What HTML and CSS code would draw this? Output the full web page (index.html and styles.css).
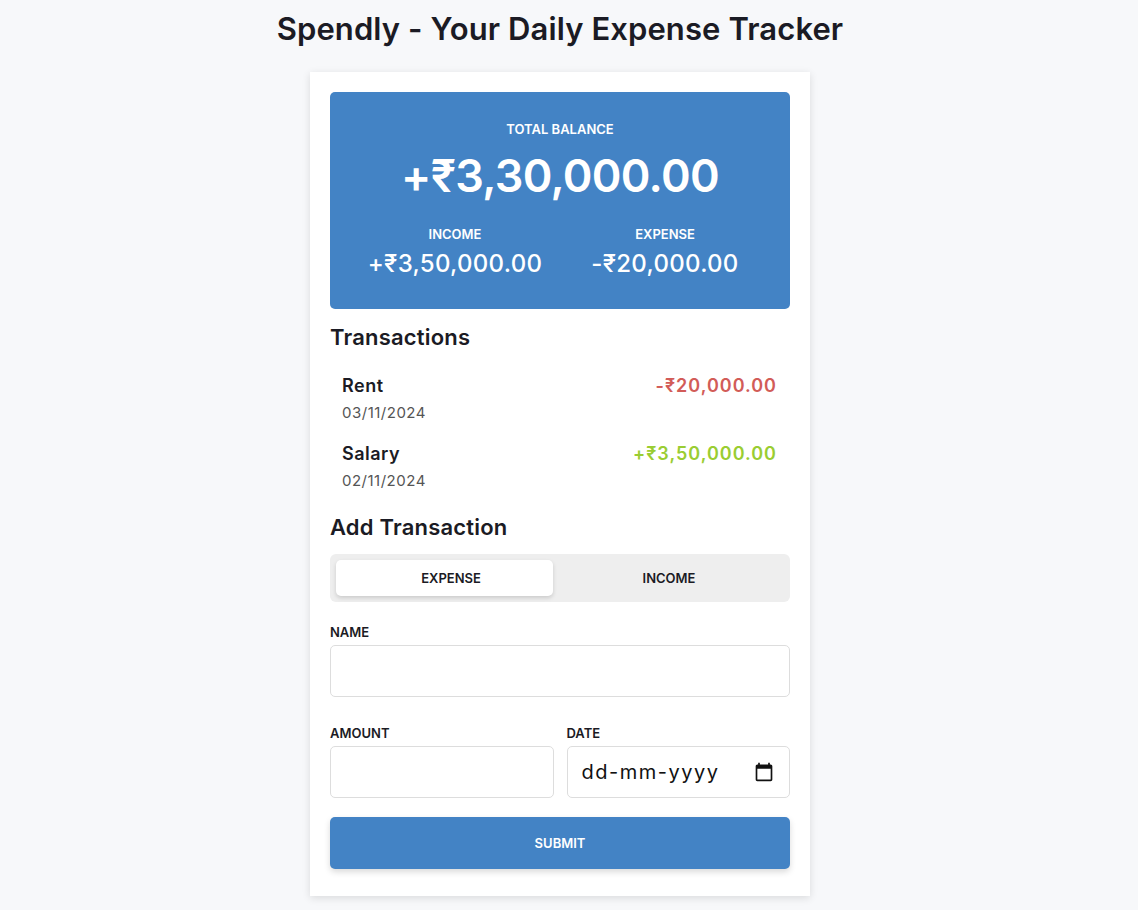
FILE: index.html
```html
<!DOCTYPE html>
<html lang="en">
<head>
<meta charset="utf-8">
<title>Spendly</title>
<link rel="stylesheet" href="styles.css">
</head>
<body>
<div class="page">
  <h1 class="title">Spendly - Your Daily Expense Tracker</h1>
  <main class="card">
    <section class="balance">
      <div class="balance-label">TOTAL BALANCE</div>
      <div class="balance-amount">+₹3,30,000.00</div>
      <div class="summary">
        <div class="summary-col">
          <div class="summary-label">INCOME</div>
          <div class="summary-amount">+₹3,50,000.00</div>
        </div>
        <div class="summary-col">
          <div class="summary-label">EXPENSE</div>
          <div class="summary-amount">-₹20,000.00</div>
        </div>
      </div>
    </section>

    <h2 class="section-title">Transactions</h2>
    <ul class="tx-list">
      <li class="tx">
        <div class="tx-info">
          <div class="tx-name">Rent</div>
          <div class="tx-date">03/11/2024</div>
        </div>
        <div class="tx-amount expense">-₹20,000.00</div>
      </li>
      <li class="tx">
        <div class="tx-info">
          <div class="tx-name">Salary</div>
          <div class="tx-date">02/11/2024</div>
        </div>
        <div class="tx-amount income">+₹3,50,000.00</div>
      </li>
    </ul>

    <h2 class="section-title add-title">Add Transaction</h2>
    <form class="form">
      <div class="toggle">
        <button type="button" class="toggle-btn active">EXPENSE</button>
        <button type="button" class="toggle-btn">INCOME</button>
      </div>
      <label class="field">
        <span class="field-label">NAME</span>
        <input class="input" type="text">
      </label>
      <div class="row">
        <label class="field">
          <span class="field-label">AMOUNT</span>
          <input class="input" type="text" inputmode="decimal">
        </label>
        <label class="field">
          <span class="field-label">DATE</span>
          <span class="date-wrap">
            <input class="input date-input" type="text" placeholder="dd-mm-yyyy">
            <svg class="date-icon" viewBox="0 0 24 24" width="20" height="20" aria-hidden="true">
              <path d="M20 3h-1V1h-2v2H7V1H5v2H4c-1.1 0-2 .9-2 2v16c0 1.1.9 2 2 2h16c1.1 0 2-.9 2-2V5c0-1.1-.9-2-2-2zm0 18H4V8h16v13z" fill="#111"/>
            </svg>
          </span>
        </label>
      </div>
      <button type="button" class="submit">SUBMIT</button>
    </form>
  </main>
</div>
</body>
</html>
```

FILE: styles.css
```css
* { box-sizing: border-box; }

body {
  margin: 0;
  background: #f7f8fa;
  font-family: "Inter", "Noto Sans", sans-serif;
  color: #1b1b24;
}

.page {
  display: flex;
  flex-direction: column;
  align-items: center;
  padding-right: 18px;
  padding-bottom: 20px;
}

.title {
  margin: 12px 0 26px;
  font-size: 31px;
  font-weight: 600;
  line-height: 34px;
  letter-spacing: 0.1px;
  color: #1b1b24;
}

.card {
  width: 500px;
  background: #fff;
  padding: 20px 20px 27px;
  box-shadow: 0 2px 8px rgba(0, 0, 0, 0.12);
}

.balance {
  background: #4383c5;
  color: #fff;
  border-radius: 5px;
  padding: 28px 20px 30px;
  text-align: center;
}

.balance-label,
.summary-label {
  font-size: 13px;
  font-weight: 600;
  line-height: 18px;
}

.balance-amount {
  font-size: 45px;
  font-weight: 600;
  line-height: 56px;
  letter-spacing: -0.7px;
  margin-top: 10px;
}

.summary {
  display: grid;
  grid-template-columns: 190px 190px;
  column-gap: 20px;
  justify-content: center;
  margin-top: 21px;
}

.summary-amount {
  font-size: 24px;
  font-weight: 500;
  line-height: 30px;
  letter-spacing: 0.3px;
  margin-top: 6px;
}

.section-title {
  margin: 13px 0 0;
  font-size: 22px;
  font-weight: 600;
  line-height: 30px;
  letter-spacing: 0.2px;
}

.tx-list {
  list-style: none;
  margin: 21px 0 0;
  padding: 0;
  display: flex;
  flex-direction: column;
  gap: 14px;
}

.tx {
  display: flex;
  justify-content: space-between;
  align-items: flex-start;
  padding: 0 13px 0 12px;
}

.tx-name {
  font-size: 18px;
  font-weight: 600;
  line-height: 26px;
  letter-spacing: 0.5px;
}

.tx-date {
  font-size: 15px;
  color: #555;
  line-height: 28px;
  letter-spacing: 0.5px;
}

.tx-amount {
  font-size: 18px;
  font-weight: 600;
  line-height: 26px;
  letter-spacing: 1px;
}

.tx-amount.expense { color: #d25c58; }
.tx-amount.income { color: #9acd32; }

.add-title { margin-top: 17px; }

.form {
  margin-top: 12px;
  display: flex;
  flex-direction: column;
}

.toggle {
  display: flex;
  background: #eee;
  border-radius: 6px;
  padding: 6px 12px;
}

.toggle-btn {
  position: relative;
  flex: 1;
  height: 36px;
  border: none;
  background: transparent;
  font-family: inherit;
  font-size: 13px;
  font-weight: 600;
  color: #1b1b24;
  padding: 0;
}

.toggle-btn.active::before {
  content: "";
  position: absolute;
  top: 0;
  left: -6px;
  width: 217px;
  height: 36px;
  background: #fff;
  border-radius: 5px;
  box-shadow: 0 2px 4px rgba(0, 0, 0, 0.15);
  z-index: -1;
}

.toggle-btn.active { z-index: 0; isolation: isolate; }

.field {
  display: flex;
  flex-direction: column;
  margin-top: 21px;
  flex: 1;
}

.field-label {
  font-size: 13px;
  font-weight: 600;
  line-height: 18px;
  margin-bottom: 4px;
}

.input {
  height: 52px;
  border: 1px solid #ddd;
  border-radius: 5px;
  padding: 0 14px;
  font-family: inherit;
  font-size: 20px;
  color: #111;
  background: #fff;
  outline: none;
}

.row {
  display: flex;
  gap: 13px;
  margin-top: 13px;
}

.row .field { margin-top: 14px; min-width: 0; }
.row .input { width: 100%; }

.date-wrap {
  position: relative;
  display: block;
}

.date-input::placeholder {
  color: #111;
  opacity: 1;
  letter-spacing: 1.5px;
}

.date-icon {
  position: absolute;
  right: 16px;
  top: 16px;
}

.submit {
  margin-top: 19px;
  height: 52px;
  border: none;
  border-radius: 5px;
  background: #4383c5;
  color: #fff;
  font-family: inherit;
  font-size: 13px;
  font-weight: 600;
  box-shadow: 0 3px 6px rgba(0, 0, 0, 0.15);
}
```
